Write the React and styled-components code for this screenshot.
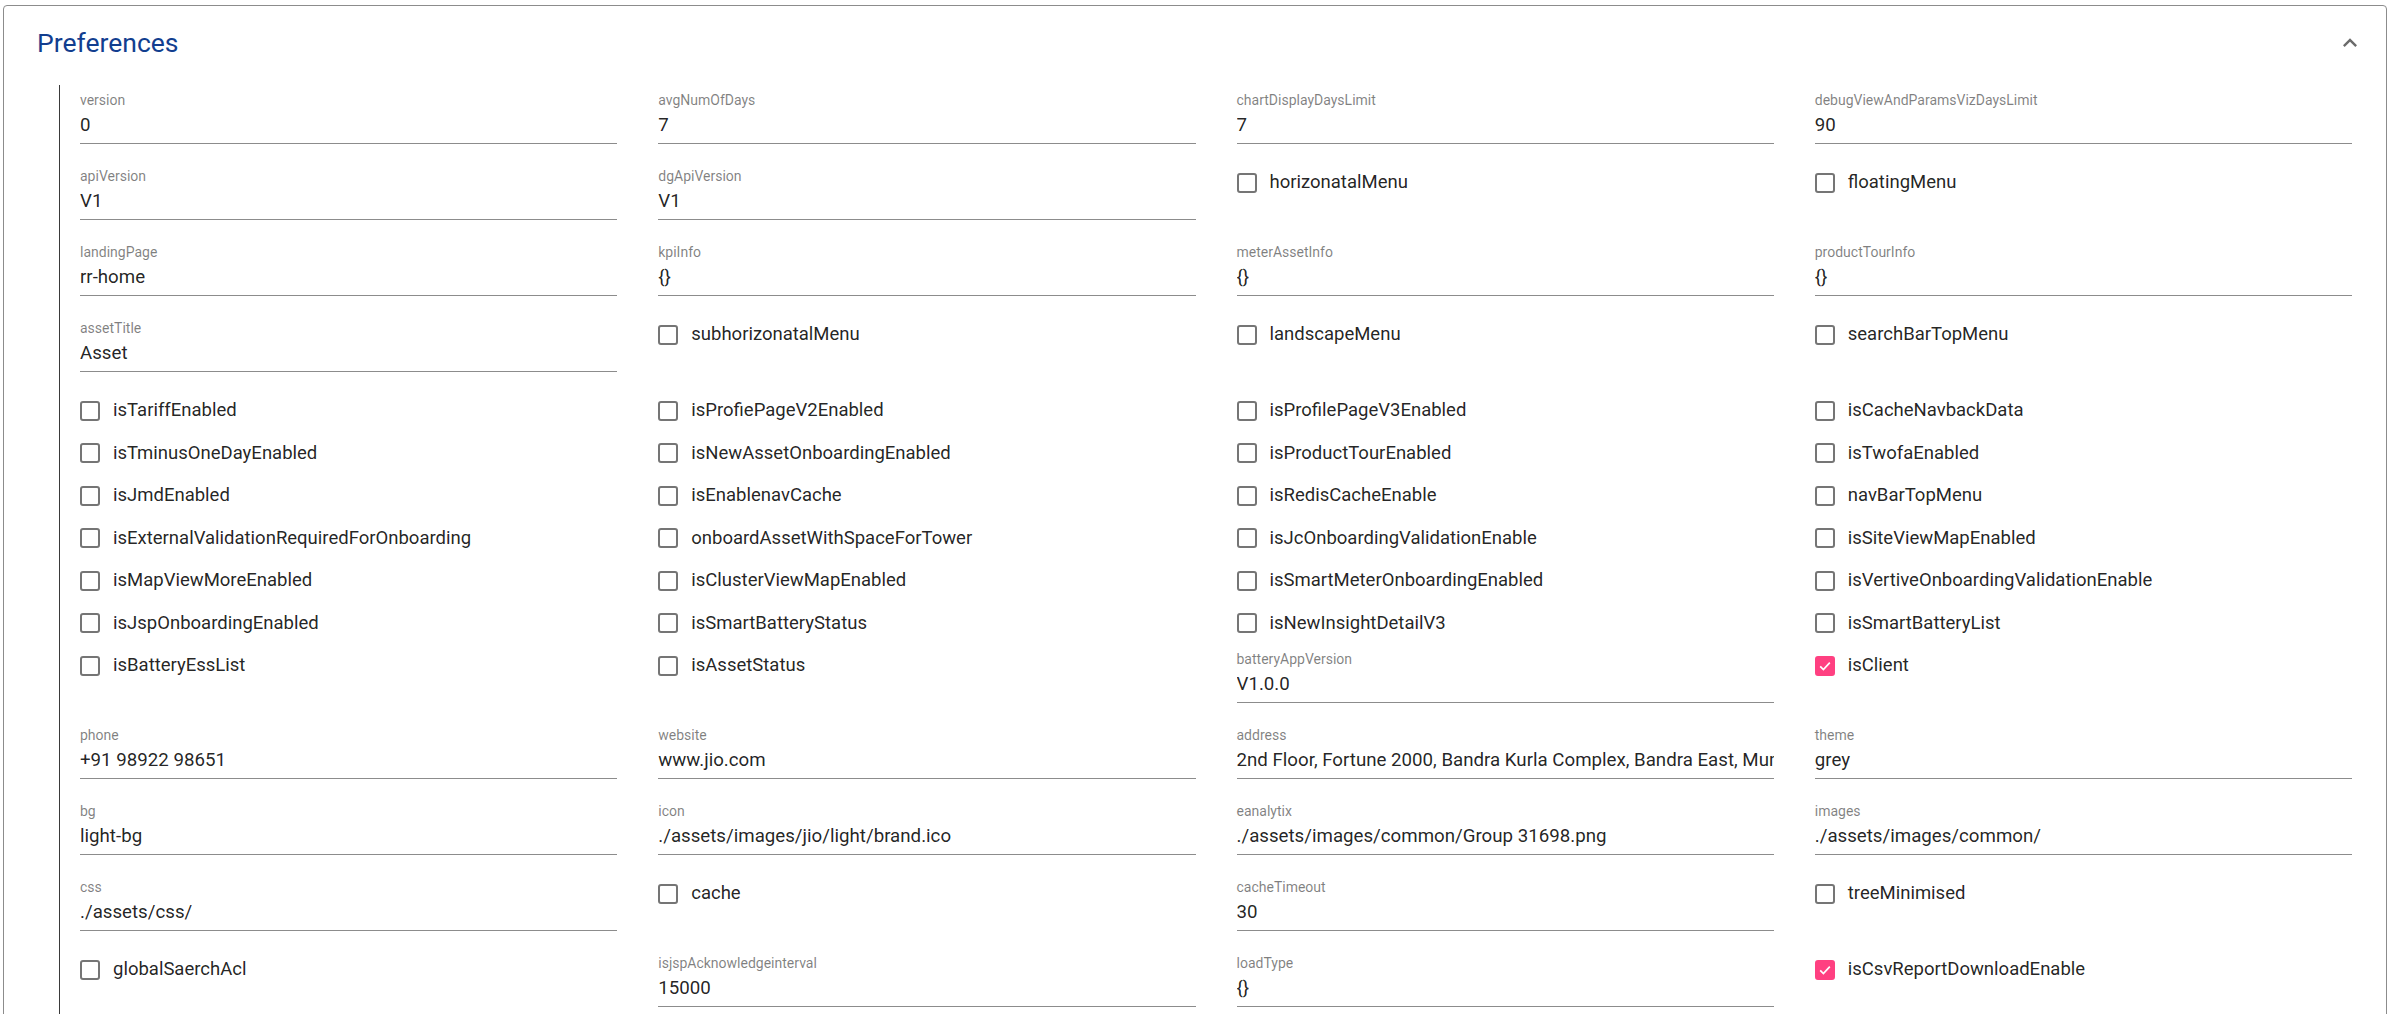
import styled, { createGlobalStyle } from 'styled-components';

const GlobalStyle = createGlobalStyle`
	html, body {
		margin: 0;
		padding: 0;
		background: #ffffff;
	}
	body {
		font-family: Roboto, 'Liberation Sans', sans-serif;
		color: rgba(0, 0, 0, 0.87);
		overflow: hidden;
	}
`;

// t = text field, c = checkbox
const rows = [
	[
		{ t: 'version', v: '0' },
		{ t: 'avgNumOfDays', v: '7' },
		{ t: 'chartDisplayDaysLimit', v: '7' },
		{ t: 'debugViewAndParamsVizDaysLimit', v: '90' },
	],
	[
		{ t: 'apiVersion', v: 'V1' },
		{ t: 'dgApiVersion', v: 'V1' },
		{ c: 'horizonatalMenu' },
		{ c: 'floatingMenu' },
	],
	[
		{ t: 'landingPage', v: 'rr-home' },
		{ t: 'kpiInfo', v: '{}' },
		{ t: 'meterAssetInfo', v: '{}' },
		{ t: 'productTourInfo', v: '{}' },
	],
	[
		{ t: 'assetTitle', v: 'Asset' },
		{ c: 'subhorizonatalMenu' },
		{ c: 'landscapeMenu' },
		{ c: 'searchBarTopMenu' },
	],
	[
		{ c: 'isTariffEnabled' },
		{ c: 'isProfiePageV2Enabled' },
		{ c: 'isProfilePageV3Enabled' },
		{ c: 'isCacheNavbackData' },
	],
	[
		{ c: 'isTminusOneDayEnabled' },
		{ c: 'isNewAssetOnboardingEnabled' },
		{ c: 'isProductTourEnabled' },
		{ c: 'isTwofaEnabled' },
	],
	[
		{ c: 'isJmdEnabled' },
		{ c: 'isEnablenavCache' },
		{ c: 'isRedisCacheEnable' },
		{ c: 'navBarTopMenu' },
	],
	[
		{ c: 'isExternalValidationRequiredForOnboarding' },
		{ c: 'onboardAssetWithSpaceForTower' },
		{ c: 'isJcOnboardingValidationEnable' },
		{ c: 'isSiteViewMapEnabled' },
	],
	[
		{ c: 'isMapViewMoreEnabled' },
		{ c: 'isClusterViewMapEnabled' },
		{ c: 'isSmartMeterOnboardingEnabled' },
		{ c: 'isVertiveOnboardingValidationEnable' },
	],
	[
		{ c: 'isJspOnboardingEnabled' },
		{ c: 'isSmartBatteryStatus' },
		{ c: 'isNewInsightDetailV3' },
		{ c: 'isSmartBatteryList' },
	],
	[
		{ c: 'isBatteryEssList' },
		{ c: 'isAssetStatus' },
		{ t: 'batteryAppVersion', v: 'V1.0.0' },
		{ c: 'isClient', on: true },
	],
	[
		{ t: 'phone', v: '+91 98922 98651' },
		{ t: 'website', v: 'www.jio.com' },
		{ t: 'address', v: '2nd Floor, Fortune 2000, Bandra Kurla Complex, Bandra East, Mumbai 400051' },
		{ t: 'theme', v: 'grey' },
	],
	[
		{ t: 'bg', v: 'light-bg' },
		{ t: 'icon', v: './assets/images/jio/light/brand.ico' },
		{ t: 'eanalytix', v: './assets/images/common/Group 31698.png' },
		{ t: 'images', v: './assets/images/common/' },
	],
	[
		{ t: 'css', v: './assets/css/' },
		{ c: 'cache' },
		{ t: 'cacheTimeout', v: '30' },
		{ c: 'treeMinimised' },
	],
	[
		{ c: 'globalSaerchAcl' },
		{ t: 'isjspAcknowledgeinterval', v: '15000' },
		{ t: 'loadType', v: '{}' },
		{ c: 'isCsvReportDownloadEnable', on: true },
	],
];

function Field({ label, value }) {
	return (
		<FieldBox>
			<FieldLabel>{label}</FieldLabel>
			<FieldValue>{value}</FieldValue>
		</FieldBox>
	);
}

function Check({ label, on }) {
	return (
		<CheckRow>
			<Box $on={on}>
				{on && (
					<svg width="14" height="14" viewBox="0 0 14 14">
						<polyline points="2.2,7.4 5.4,10.6 11.8,3.6" fill="none" stroke="#ffffff" strokeWidth="1.7" />
					</svg>
				)}
			</Box>
			<CheckLabel>{label}</CheckLabel>
		</CheckRow>
	);
}

function App() {
	return (
		<Page>
			<GlobalStyle />
			<Card>
				<Header>
					<Title>Preferences</Title>
					<svg width="28" height="28" viewBox="0 0 24 24">
						<path d="M12 8l-6 6 1.41 1.41L12 10.83l4.59 4.58L18 14z" fill="#6b6b6b" />
					</svg>
				</Header>
				<Details>
					<Grid>
						{rows.flat().map((item, i) =>
							item.t ? (
								<Field key={i} label={item.t} value={item.v} />
							) : (
								<Check key={i} label={item.c} on={item.on} />
							)
						)}
					</Grid>
				</Details>
			</Card>
		</Page>
	);
}

export default App;

const Page = styled.div`
	padding: 5px 9px 0 3px;
	height: 1014px;
	box-sizing: border-box;
	overflow: hidden;
`;

const Card = styled.div`
	border: 1px solid #8c8c8c;
	border-radius: 4px;
	min-height: 1100px;
	background: #fff;
`;

const Header = styled.div`
	display: flex;
	align-items: center;
	justify-content: space-between;
	padding: 22px 22px 0 33px;
	height: 30px;
`;

const Title = styled.h2`
	margin: 0;
	font-size: 26.5px;
	line-height: 30px;
	font-weight: 400;
	color: #123e8f;
`;

const Details = styled.div`
	margin: 33px 34px 0 55px;
	padding-left: 20px;
	border-left: 1px solid #3a3a3a;
`;

const Grid = styled.div`
	margin-top: -6.5px;
	display: grid;
	grid-template-columns: repeat(4, 1fr);
	column-gap: 41px;
	align-items: start;
`;

const FieldBox = styled.div`
	height: 76px;
	min-width: 0;
`;

const FieldLabel = styled.div`
	padding-top: 7px;
	font-size: 14px;
	line-height: 16px;
	color: rgba(0, 0, 0, 0.5);
	white-space: nowrap;
`;

const FieldValue = styled.div`
	margin-top: 6px;
	padding-bottom: 6px;
	font-size: 18.7px;
	line-height: 23px;
	color: rgba(0, 0, 0, 0.87);
	white-space: nowrap;
	overflow: hidden;
	border-bottom: 1px solid rgba(0, 0, 0, 0.45);
`;

const CheckRow = styled.div`
	height: 42.5px;
	box-sizing: border-box;
	padding-top: 2px;
	display: flex;
	align-items: center;
	gap: 13px;
`;

const Box = styled.span`
	width: 20px;
	height: 20px;
	box-sizing: border-box;
	border-radius: 3px;
	border: 2px solid ${(p) => (p.$on ? '#ff4081' : '#757575')};
	background: ${(p) => (p.$on ? '#ff4081' : 'transparent')};
	display: flex;
	align-items: center;
	justify-content: center;
	flex-shrink: 0;
`;

const CheckLabel = styled.span`
	font-size: 18.5px;
	line-height: 23px;
	white-space: nowrap;
`;
